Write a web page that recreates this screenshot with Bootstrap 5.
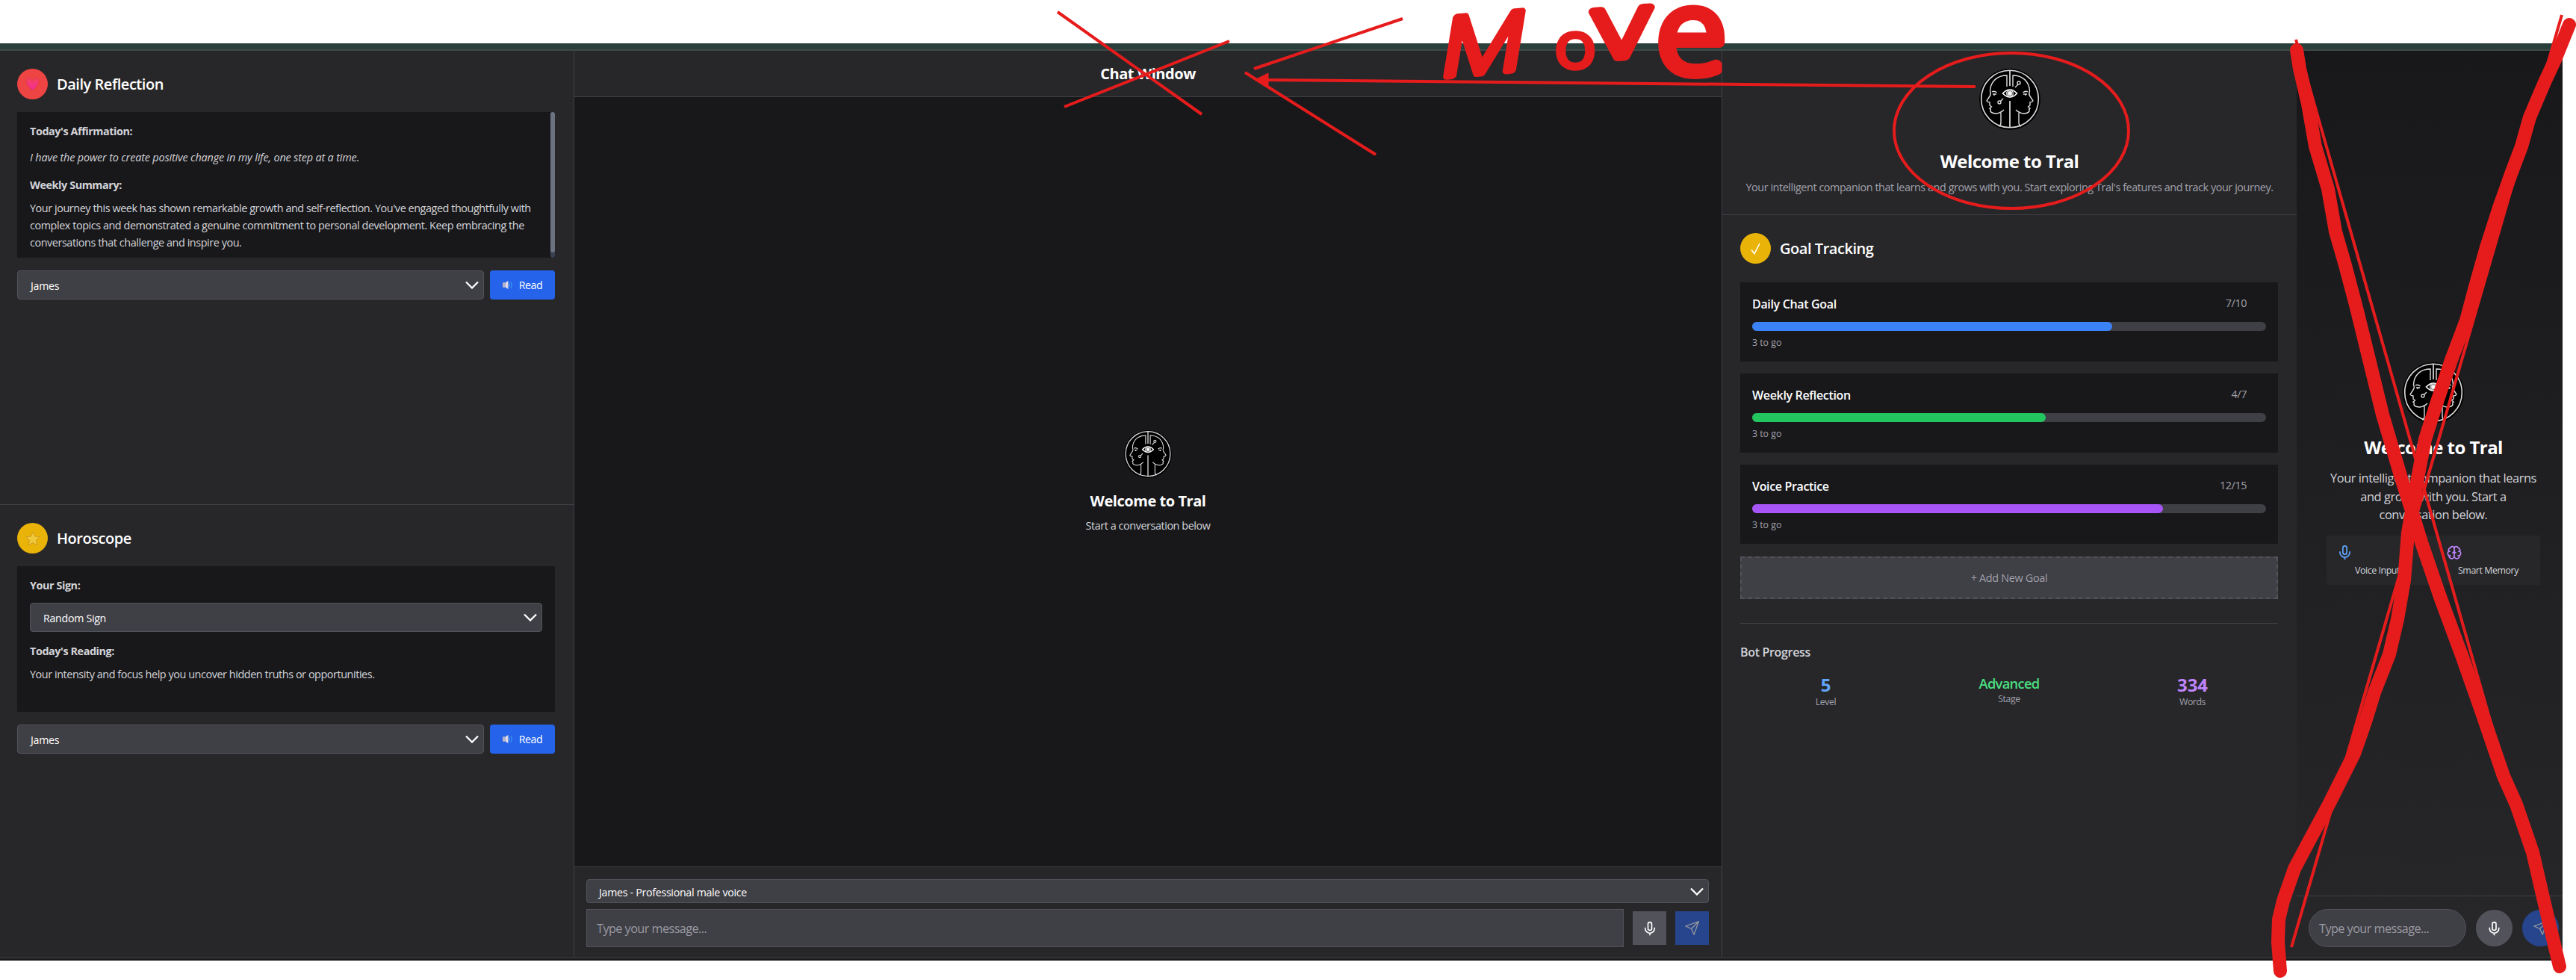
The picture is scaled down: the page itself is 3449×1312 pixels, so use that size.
<!DOCTYPE html>
<html lang="en" data-bs-theme="dark">
<head>
<meta charset="utf-8">
<meta name="viewport" content="width=device-width, initial-scale=1">
<title>Tral</title>
<link href="https://cdn.jsdelivr.net/npm/bootstrap@5.3.0/dist/css/bootstrap.min.css" rel="stylesheet">
<style>
body{margin:0;width:3449px;height:1312px;overflow:hidden;background:#fff;color:#fff;font-family:"Open Sans","Noto Sans",sans-serif;font-size:14.4px;line-height:23px;padding-top:58px;letter-spacing:-.03em}
p,h1,h2,h3{margin:0}
.app{width:3431px;height:1228px;background:#27272a;border-top:8px solid #283f3b;border-bottom:3px solid #1c191b}
.frame{height:1217px;border-top:2px solid #3f4a48;border-bottom:1px solid #3f3f46}
.panel-l{width:769px;border-right:1px solid #3f3f46}
.panel-c{width:1537px;border-right:1px solid #3f3f46}
.panel-r{width:769px}
.panel-x{width:356px;background:linear-gradient(#18181b,#27272a)}
.sect{height:608px;padding:24px 25px 0 23px}
.sect+.sect{height:606px}
.line-b{border-bottom:1px solid #3f3f46}
.line-t{border-top:1px solid #3f3f46}
.disc{width:41px;height:41px;border-radius:50%}
.disc-red{background:#ef4444}
.disc-gold{background:#eab308}
.sect-title{font-size:20px;font-weight:600;line-height:28px;padding-top:7px;margin-left:12px;letter-spacing:-.023em}
.box{background:#18181b;height:195px;margin-top:17px;padding:14px 17px 0;color:#d4d4d8;position:relative}
.box .fst-italic{letter-spacing:-.011em;margin-top:12px}
.lead-in{margin-top:14px}
.para{margin-top:8px}
.thumb{position:absolute;right:0;top:0;width:6px;height:195px;border-radius:3px;background:#374151}
.thumb i{display:block;height:188px;border-radius:3px;background:#6b7280}
.controls{margin-top:17px}
.sel{height:39px;border:1px solid #52525b;border-radius:4px;background:#3f3f46;color:#fff;padding:1px 6px 0 17px;font-size:14.2px;letter-spacing:-.02em}
.sel svg{margin-top:-2px}
.sel-sign{margin-top:12px}
.sel-voice{height:32px;padding-top:2px;padding-left:16px}
.read{width:87px;height:39px;border:0;border-radius:4px;background:#2563eb;color:#fff;font-size:14.2px;padding:0 0 1px;letter-spacing:-.03em}
.head{height:62px;font-size:20px;font-weight:700;letter-spacing:-.022em}
.canvas{height:1030px;background:#18181b;padding-top:446px}
.hello{font-weight:700;letter-spacing:-.023em;font-size:24px;line-height:34px}
.hello-sm{font-size:20px;line-height:28px;margin:17px 0 7px}
.soft{color:#d4d4d8}
.msg{background:#3f3f46;border:1px solid #52525b;color:#9a9aa2;font-size:16.2px;padding:2px 13px 0;letter-spacing:-.033em;height:51px}
.sq{width:45px;height:45px;background:#52525b}
.rd{width:49px;height:49px}
.snd{background:#26458c;color:#8b8f9c}
.intro{height:220px;padding-top:24px}
.intro .hello{margin:25px 0 6px}
.goal{background:#18181b;height:106px;padding:16px 16px 0}
.goal+.goal{margin-top:16px}
.goal-row{padding-right:26px}
.goal b{font-size:16px;font-weight:600;line-height:26px;letter-spacing:-.021em}
.bar{height:12px;border-radius:6px;background:#3f3f46;margin-top:11px}
.bar i{display:block;height:12px;border-radius:6px}
.left-n{font-size:12.3px;line-height:20px;margin-top:6px;letter-spacing:0}
.mut{color:#a1a1aa}
.add{height:57px;border:2px dashed #52525b;background:#3f3f46;margin-top:17px;letter-spacing:-.022em}
.bot{margin-top:32px;padding-top:25px}
.bot h3{font-size:16px;font-weight:600;line-height:26px;letter-spacing:-.02em}
.stats{margin:15px -8px 0}
.stat{width:245px;line-height:20px;font-size:12.3px}
.stat .mut{margin-top:-2px}
.big{font-size:24px;font-weight:700;line-height:31px;letter-spacing:0}
.stage{font-size:18.4px;font-weight:600;line-height:27px;color:#4ade80;letter-spacing:-.04em}
.side{height:1131px;padding:417px 0 0 10px}
.side .hello{margin:15px 0 12px}
.side p{font-size:16.4px;line-height:24.6px}
.feat{width:286px;height:66px;background:#27272a;margin-top:15px;padding:12px 14px 0;font-size:12.4px;line-height:20px}
.feat>div:first-child{width:146px}
.side-foot{padding:17px 5px 0 16px;gap:13px}
.side-foot .msg{width:211px}
.ink{position:absolute;left:0;top:0;z-index:5;pointer-events:none}
</style>
<script src="https://cdn.jsdelivr.net/npm/bootstrap@5.3.0/dist/js/bootstrap.bundle.min.js"></script>
</head>
<body>
<svg width="0" height="0" class="position-absolute">
<defs>
<symbol id="logo" viewBox="0 0 82 82"><circle cx="41" cy="41" r="41" fill="#000"/><g fill="none" stroke="#ddd" stroke-width="1.4"><circle cx="41" cy="40.5" r="38.3" stroke-width="1.6"/><path d="M41 2V23M41 43V79" stroke-width="1.7"/><g id="half"><path d="M37 24V9C24 9 15 17 14.500 30Q16 34 14.500 36L10 43Q11 45 14 45L14 49L16.500 51L14 53Q16 54 15 57Q17 60 23 60Q29 59 33 55M29 59V72Q29 76 26 77M17 31Q20 29 23.500 32M18 34H23M20 34V36"/></g><use href="#half" transform="matrix(-1 0 0 1 82 0)"/><path d="M31.500 33Q41 23 50.500 33Q41 43 31.500 33Z" stroke="#fff" stroke-width="1.7"/><circle cx="41" cy="33" r="4.300"/><circle cx="41" cy="33" r="2.500" fill="#fff"/><circle cx="53" cy="19" r="2"/><path d="M52 21L48 25M28 44L32 40"/><circle cx="27" cy="45" r="2"/></g></symbol>
<symbol id="mic" viewBox="0 0 24 24"><path d="M12 2a3 3 0 0 0-3 3v7a3 3 0 0 0 6 0V5a3 3 0 0 0-3-3ZM19.500 10.500V12a7.500 7.500 0 0 1-15 0V10.500M12 19.500v3.500" fill="none" stroke="currentColor" stroke-width="2"/></symbol>
<symbol id="plane" viewBox="0 0 24 24"><path d="M22 2L15 22L11 13L2 9ZM22 2L11 13" fill="none" stroke="currentColor" stroke-width="1.700" stroke-linejoin="round"/></symbol>
<symbol id="chev" viewBox="0 0 18 11"><path d="M1 1.500L9 9.500L17 1.500" fill="none" stroke="#fff" stroke-width="2.300"/></symbol>
<symbol id="spk" viewBox="0 0 15 13"><path d="M0 3H4V10H0Z" fill="#b8b5c4"/><path d="M4 3L8 .5V12.500L4 10Z" fill="#dedbe6"/><path d="M9.500 4Q11 6.500 9.500 9M11.500 2Q14.500 6.500 11.500 11" fill="none" stroke="#3b9cf0" stroke-width="1.200"/></symbol>
<symbol id="brain" viewBox="0 0 24 24"><path d="M12 5.500A3 3 0 0 0 6.200 5 4 4 0 0 0 3.500 10.500 4 4 0 0 0 4 17 4 4 0 0 0 12 18ZM12 5.500A3 3 0 0 1 17.800 5 4 4 0 0 1 20.500 10.500 4 4 0 0 1 20 17 4 4 0 0 1 12 18ZM9 13Q12 12 12 8.500Q12 12 15 13M6 10.500H4M18 10.500H20M6 18V16M18 18V16" fill="none" stroke="currentColor" stroke-width="1.900"/></symbol>
<linearGradient id="hg" x2="0" y2="1"><stop stop-color="#f4455c"/><stop offset="1" stop-color="#f52a9c"/></linearGradient>
</defs>
</svg>
<div class="app"><div class="frame d-flex">
 <aside class="panel-l">
  <section class="sect line-b">
   <div class="d-flex"><div class="disc disc-red d-flex align-items-center justify-content-center"><svg width="19" height="17" viewBox="0 0 18 17"><path d="M9 16.500Q1 11 .5 5Q1 .5 5 .7Q8 1.500 9 5Q10 1.500 13.500 .7Q17.500 .5 17.500 5Q17 11 9 16.500Z" fill="url(#hg)" stroke="#d9304f" stroke-width=".7"/></svg></div><h2 class="sect-title">Daily Reflection</h2></div>
   <div class="box"><p class="fw-bold">Today's Affirmation:</p><p class="fst-italic">I have the power to create positive change in my life, one step at a time.</p><p class="fw-bold lead-in">Weekly Summary:</p><p class="text-nowrap para">Your journey this week has shown remarkable growth and self-reflection. You've engaged thoughtfully with<br>complex topics and demonstrated a genuine commitment to personal development. Keep embracing the<br>conversations that challenge and inspire you.</p><div class="thumb"><i></i></div></div>
   <div class="d-flex gap-2 controls"><div class="sel flex-grow-1 d-flex align-items-center justify-content-between"><span>James</span><svg width="18" height="11"><use href="#chev"/></svg></div><button class="read d-flex align-items-center justify-content-center gap-2"><svg width="14" height="13"><use href="#spk"/></svg><span>Read</span></button></div>
  </section>
  <section class="sect">
   <div class="d-flex"><div class="disc disc-gold d-flex align-items-center justify-content-center"><svg width="20" height="20" viewBox="0 0 20 20"><path d="M10 1L12.700 7L19 7.700L14.500 12.300L16 19L10 15.700L4 19L5.500 12.300L1 7.700L7.300 7Z" fill="#efc83a" stroke="#d09a22" stroke-width="1" stroke-linejoin="round"/></svg></div><h2 class="sect-title">Horoscope</h2></div>
   <div class="box"><p class="fw-bold">Your Sign:</p><div class="sel sel-sign d-flex align-items-center justify-content-between"><span>Random Sign</span><svg width="18" height="11"><use href="#chev"/></svg></div><p class="fw-bold lead-in">Today's Reading:</p><p class="para">Your intensity and focus help you uncover hidden truths or opportunities.</p></div>
   <div class="d-flex gap-2 controls"><div class="sel flex-grow-1 d-flex align-items-center justify-content-between"><span>James</span><svg width="18" height="11"><use href="#chev"/></svg></div><button class="read d-flex align-items-center justify-content-center gap-2"><svg width="14" height="13"><use href="#spk"/></svg><span>Read</span></button></div>
  </section>
 </aside>
 <main class="panel-c">
  <div class="head line-b d-flex align-items-center justify-content-center">Chat Window</div>
  <div class="canvas d-flex flex-column align-items-center"><svg width="64" height="64"><use href="#logo"/></svg><h2 class="hello hello-sm">Welcome to Tral</h2><p class="soft">Start a conversation below</p></div>
  <div class="line-t" style="padding:16px 17px 0 16px">
   <div class="sel sel-voice d-flex align-items-center justify-content-between"><span>James - Professional male voice</span><svg width="18" height="11"><use href="#chev"/></svg></div>
   <div class="d-flex align-items-center mt-2" style="gap:12px"><div class="msg flex-grow-1 d-flex align-items-center">Type your message...</div><div class="sq d-flex align-items-center justify-content-center"><svg width="20" height="20"><use href="#mic"/></svg></div><div class="sq snd d-flex align-items-center justify-content-center"><svg width="21" height="21"><use href="#plane"/></svg></div></div>
  </div>
 </main>
 <aside class="panel-r">
  <section class="intro line-b text-center"><svg width="82" height="82" class="d-block mx-auto"><use href="#logo"/></svg><h2 class="hello">Welcome to Tral</h2><p class="text-nowrap mut">Your intelligent companion that learns and grows with you. Start exploring Tral's features and track your journey.</p></section>
  <section style="padding:24px 25px 0 24px">
   <div class="d-flex"><div class="disc disc-gold d-flex align-items-center justify-content-center"><svg width="14" height="16" viewBox="0 0 14 16"><path d="M1 9.500L5 14.500L12 1" fill="none" stroke="#fff" stroke-width="1.600"/></svg></div><h2 class="sect-title">Goal Tracking</h2></div>
   <div style="margin-top:25px">
    <div class="goal"><div class="d-flex justify-content-between goal-row"><b>Daily Chat Goal</b><span class="mut">7/10</span></div><div class="bar"><i style="width:70%;background:#3b82f6"></i></div><p class="mut left-n">3 to go</p></div>
    <div class="goal"><div class="d-flex justify-content-between goal-row"><b>Weekly Reflection</b><span class="mut">4/7</span></div><div class="bar"><i style="width:57.14%;background:#22c55e"></i></div><p class="mut left-n">3 to go</p></div>
    <div class="goal"><div class="d-flex justify-content-between goal-row"><b>Voice Practice</b><span class="mut">12/15</span></div><div class="bar"><i style="width:80%;background:#a855f7"></i></div><p class="mut left-n">3 to go</p></div>
   </div>
   <div class="add mut d-flex align-items-center justify-content-center">+ Add New Goal</div>
   <div class="line-t bot"><h3 class="soft">Bot Progress</h3>
    <div class="d-flex text-center justify-content-between stats"><div class="stat"><div class="big" style="color:#60a5fa">5</div><div class="mut">Level</div></div><div class="stat"><div class="stage">Advanced</div><div class="mut">Stage</div></div><div class="stat"><div class="big" style="color:#c084fc">334</div><div class="mut">Words</div></div></div>
   </div>
  </section>
 </aside>
 <aside class="panel-x d-flex flex-column">
  <div class="side d-flex flex-column align-items-center"><svg width="82" height="82" class="flex-shrink-0"><use href="#logo"/></svg><h2 class="hello">Welcome to Tral</h2><p class="text-center text-nowrap soft">Your intelligent companion that learns<br>and grows with you. Start a<br>conversation below.</p>
   <div class="feat soft d-flex"><div><svg width="21" height="21" color="#60a5fa" class="d-block"><use href="#mic"/></svg><div class="ps-4 pt-1">Voice Input</div></div><div><svg width="22" height="21" color="#c084fc" class="d-block"><use href="#brain"/></svg><div class="ps-3 pt-1">Smart Memory</div></div></div></div>
  <div class="line-t side-foot d-flex align-items-center"><div class="msg rounded-pill d-flex align-items-center">Type your message...</div><div class="sq rd rounded-circle d-flex align-items-center justify-content-center"><svg width="21" height="20"><use href="#mic"/></svg></div><div class="sq rd snd rounded-circle d-flex align-items-center justify-content-center"><svg width="21" height="21"><use href="#plane"/></svg></div></div>
 </aside>
</div></div>
<!-- Red review marks drawn over the layout -->
<svg class="ink" width="3449" height="1312" fill="none" stroke="#e61c1c" stroke-width="4" stroke-linejoin="round">
<path d="M1416 16L1609 153M1425 143L1646 55M1679 92L1878 25M1667 97L1842 207M2645 116L1690 107M3074 53L3427 1290M3430 20L3068 1268"/>
<path d="M1680 107L1698 98V116Z" fill="#e61c1c" stroke-width="1"/>
<ellipse cx="2693" cy="175" rx="157" ry="104"/>
<g stroke-width="18" stroke-linecap="round">
<path d="M3075 67L3079 92L3090 139L3100 196L3117 253L3127 310L3140 355L3155 412L3170 473L3190 555L3215 640L3230 687L3242 726L3267 799L3297 880L3324 957L3352 1039L3369 1077L3391 1141L3406 1206L3427 1294"/>
<path d="M3440 33L3421 80L3407 110L3387 157L3376 196L3362 233L3346 278L3329 331L3314 384L3302 429L3282 482L3264 535L3247 588L3237 640L3224 713L3219 777L3210 829L3199 876L3179 927L3167 966L3152 1009L3118 1077L3090 1129L3072 1163L3057 1206L3051 1231L3050 1261L3053 1300"/>
</g>
<g fill="#e61c1c" stroke-width="9" letter-spacing="0" font-family="Open Sans, sans-serif" font-size="100" font-weight="300"><text transform="matrix(1.3 -.12 -.18 1.1 1925 103)">M</text><text transform="translate(2082 90) scale(.93 .82)">o</text><text transform="matrix(1.62 -.12 0 1.2 2134 79)">v</text><text transform="matrix(1.7 0 0 1.55 2218 97)">e</text></g>
</svg>
</body>
</html>
